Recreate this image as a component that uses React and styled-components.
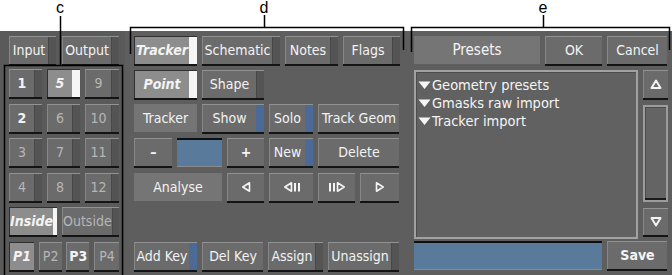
import React from 'react';
import styled, { createGlobalStyle } from 'styled-components';

const GlobalStyle = createGlobalStyle`
  html, body {
    margin: 0;
    padding: 0;
    background: #ffffff;
  }
  body {
    font-family: "DejaVu Sans Condensed", "DejaVu Sans", sans-serif;
    font-stretch: condensed;
  }
`;

const Page = styled.div`
  position: relative;
  width: 672px;
  height: 275px;
  overflow: hidden;
  background: #ffffff;
`;

const Header = styled.div`
  height: 31px;
`;

const Panel = styled.div`
  display: grid;
  grid-template-columns: 125px 280px 267px;
  height: 244px;
  background: #5e5e5e;
`;

const Column = styled.div`
  display: flex;
  flex-direction: column;
  box-sizing: border-box;
  padding: 5px 0 5px ${(p) => p.$pad}px;
  background: ${(p) => p.$bg || 'transparent'};
`;

const Row = styled.div`
  display: flex;
  gap: ${(p) => (p.$gap === undefined ? 5 : p.$gap)}px;
  & + & {
    margin-top: 6px;
  }
`;

const BottomRow = styled(Row)`
  && {
    margin-top: auto;
  }
`;

const NumberArea = styled.div`
  flex: 1;
  margin-top: 5px;
  width: 110px;
  display: flex;
  flex-direction: column;
  justify-content: space-between;
`;

const NumberRow = styled.div`
  display: flex;
  justify-content: ${(p) => (p.$spread ? 'space-between' : 'flex-start')};
  gap: ${(p) => (p.$spread ? 0 : 5)}px;
`;

const Btn = styled.div`
  box-sizing: border-box;
  flex: none;
  width: ${(p) => p.$w}px;
  height: 28px;
  display: flex;
  background: ${(p) => (p.$on ? '#8d8d8d' : '#6b6b6b')};
  border-top: 1px solid ${(p) => (p.$on ? '#303030' : '#929292')};
  border-left: 1px solid ${(p) => (p.$on ? '#303030' : '#878787')};
  box-shadow: 0 2px 0 #141414;
  color: ${(p) => (p.$dim ? '#b6b6b6' : '#f3f3f3')};
  font-size: 14px;
  font-weight: ${(p) => (p.$bold || p.$on ? 700 : 400)};
  font-style: ${(p) => (p.$on ? 'italic' : 'normal')};
  overflow: hidden;
`;

const Face = styled.span`
  flex: 1;
  display: flex;
  align-items: center;
  justify-content: center;
  white-space: nowrap;
  padding-bottom: 1px;
`;

const stripTones = {
  dark: '#545454',
  white: '#f5f5f5',
  blue: '#4b6b96',
};

const Strip = styled.span`
  flex: none;
  width: 7px;
  background: ${(p) => stripTones[p.$tone]};
  border-left: 1px solid ${(p) => (p.$tone === 'dark' ? '#484848' : 'transparent')};
  border-top: 1px solid ${(p) => (p.$tone === 'dark' ? '#7a7a7a' : 'transparent')};
  margin-top: -1px;
`;

const Tag = styled.div`
  box-sizing: border-box;
  flex: none;
  width: ${(p) => p.$w}px;
  height: 28px;
  display: flex;
  align-items: center;
  justify-content: center;
  background: #757575;
  color: #f3f3f3;
  font-size: ${(p) => p.$size || 14}px;
  white-space: nowrap;
`;

const Field = styled.div`
  box-sizing: border-box;
  flex: none;
  width: ${(p) => p.$w}px;
  height: ${(p) => p.$h || 29}px;
  background: #5a7a9b;
  border-top: 2px solid #101010;
  border-bottom: 1px solid #8c8c8c;
`;

const Browser = styled.div`
  display: flex;
  gap: 5px;
  margin-top: 6px;
`;

const ListBox = styled.div`
  box-sizing: border-box;
  width: 224px;
  height: 169px;
  border: 2px solid #a2a2a2;
  box-shadow: inset 1px 1px 0 #4c4c4c;
  background: #616161;
  padding: 4px 0 0 2px;
`;

const ListItem = styled.div`
  display: flex;
  align-items: center;
  gap: 1px;
  height: 18px;
  color: #f5f5f5;
  font-size: 14.5px;
  white-space: nowrap;
`;

const ScrollCol = styled.div`
  display: flex;
  flex-direction: column;
  width: 25px;
`;

const ScrollBtn = styled(Btn)`
  width: 25px;
  height: ${(p) => p.$h}px;
`;

const Track = styled.div`
  box-sizing: border-box;
  height: 97px;
  margin: 7px 0 6px;
  border: 2px solid #9c9c9c;
  box-shadow: inset 0 -2px 0 #1a1a1a, inset 1px 1px 0 #4c4c4c;
  background: #646464;
`;

const Overlay = styled.svg`
  position: absolute;
  left: 0;
  top: 0;
  pointer-events: none;
`;

const Mark = styled.span`
  position: absolute;
  top: 0;
  left: ${(p) => p.$x}px;
  transform: translateX(-50%);
  font-family: "Liberation Sans", Arial, sans-serif;
  font-size: 16px;
  line-height: 16px;
  color: #000;
`;

const Button = ({ w, strip, on, dim, bold, children }) => (
  <Btn $w={w} $on={on} $dim={dim} $bold={bold}>
    <Face>{children}</Face>
    {strip && <Strip $tone={strip} />}
  </Btn>
);

const icon = { fill: 'none', stroke: '#f3f3f3', strokeWidth: 1.6, strokeLinejoin: 'round' };

const BackIcon = () => (
  <svg width="10" height="12" viewBox="0 0 10 12">
    <path d="M8.5 1.8 L1.8 6 L8.5 10.2 Z" {...icon} />
  </svg>
);

const StepBackIcon = () => (
  <svg width="18" height="12" viewBox="0 0 18 12">
    <path d="M8.5 1.8 L1.8 6 L8.5 10.2 Z" {...icon} />
    <rect x="11" y="2" width="2" height="8.5" fill="#f3f3f3" />
    <rect x="15" y="2" width="2" height="8.5" fill="#f3f3f3" />
  </svg>
);

const StepFwdIcon = () => (
  <svg width="18" height="12" viewBox="0 0 18 12">
    <rect x="1" y="2" width="2" height="8.5" fill="#f3f3f3" />
    <rect x="5" y="2" width="2" height="8.5" fill="#f3f3f3" />
    <path d="M9.5 1.8 L16.2 6 L9.5 10.2 Z" {...icon} />
  </svg>
);

const FwdIcon = () => (
  <svg width="10" height="12" viewBox="0 0 10 12">
    <path d="M1.5 1.8 L8.2 6 L1.5 10.2 Z" {...icon} />
  </svg>
);

const UpIcon = () => (
  <svg width="14" height="12" viewBox="0 0 14 12">
    <path d="M7 2.5 L11.5 10 L2.5 10 Z" {...icon} strokeWidth="2" />
  </svg>
);

const DownIcon = () => (
  <svg width="14" height="12" viewBox="0 0 14 12">
    <path d="M2.5 2 L11.5 2 L7 9.5 Z" {...icon} strokeWidth="2" />
  </svg>
);

const Caret = () => (
  <svg width="13" height="10" viewBox="0 0 13 10">
    <path d="M0.5 1.5 L12.5 1.5 L6.5 9 Z" fill="#f5f5f5" />
  </svg>
);

const presets = ['Geometry presets', 'Gmasks raw import', 'Tracker import'];

const App = () => {
  return (
    <Page>
      <GlobalStyle />
      <Header />
      <Panel>
        <Column $pad={9} $bg="#5a5a5a">
          <Row $gap={6}>
            <Button w={47} strip="dark">Input</Button>
            <Button w={57} strip="dark">Output</Button>
          </Row>
          <NumberArea>
            <NumberRow>
              <Button w={33} strip="dark" bold>1</Button>
              <Button w={33} strip="white" on>5</Button>
              <Button w={34} strip="dark" dim>9</Button>
            </NumberRow>
            <NumberRow>
              <Button w={33} strip="dark" bold>2</Button>
              <Button w={33} strip="dark" dim>6</Button>
              <Button w={34} strip="dark" dim>10</Button>
            </NumberRow>
            <NumberRow>
              <Button w={33} strip="dark" dim>3</Button>
              <Button w={33} strip="dark" dim>7</Button>
              <Button w={34} strip="dark" dim>11</Button>
            </NumberRow>
            <NumberRow>
              <Button w={33} strip="dark" dim>4</Button>
              <Button w={33} strip="dark" dim>8</Button>
              <Button w={34} strip="dark" dim>12</Button>
            </NumberRow>
            <NumberRow $spread>
              <Button w={48} strip="white" on>Inside</Button>
              <Button w={57} strip="dark" dim>Outside</Button>
            </NumberRow>
            <NumberRow $spread>
              <Button w={25} on>P1</Button>
              <Button w={23} dim>P2</Button>
              <Button w={23} bold>P3</Button>
              <Button w={25} dim>P4</Button>
            </NumberRow>
          </NumberArea>
        </Column>

        <Column $pad={9}>
          <Row>
            <Button w={63} strip="white" on>Tracker</Button>
            <Button w={78} strip="dark">Schematic</Button>
            <Button w={53} strip="dark">Notes</Button>
            <Button w={57} strip="dark">Flags</Button>
          </Row>
          <Row>
            <Button w={63} strip="white" on>Point</Button>
            <Button w={62} strip="dark">Shape</Button>
          </Row>
          <Row>
            <Tag $w={63}>Tracker</Tag>
            <Button w={62} strip="blue">Show</Button>
            <Button w={44} strip="blue">Solo</Button>
            <Button w={81}>Track Geom</Button>
          </Row>
          <Row>
            <Button w={38} bold>–</Button>
            <Field $w={45} />
            <Button w={37} bold>+</Button>
            <Button w={44} strip="blue">New</Button>
            <Button w={81}>Delete</Button>
          </Row>
          <Row>
            <Tag $w={88}>Analyse</Tag>
            <Button w={37}><BackIcon /></Button>
            <Button w={44}><StepBackIcon /></Button>
            <Button w={37}><StepFwdIcon /></Button>
            <Button w={39}><FwdIcon /></Button>
          </Row>
          <BottomRow>
            <Button w={63} strip="blue">Add Key</Button>
            <Button w={61}>Del Key</Button>
            <Button w={55} strip="dark">Assign</Button>
            <Button w={71} strip="dark">Unassign</Button>
          </BottomRow>
        </Column>

        <Column $pad={9}>
          <Row>
            <Tag $w={126} $size={15}>Presets</Tag>
            <Button w={57}>OK</Button>
            <Button w={60}>Cancel</Button>
          </Row>
          <Browser>
            <ListBox>
              {presets.map((name) => (
                <ListItem key={name}>
                  <Caret />
                  {name}
                </ListItem>
              ))}
            </ListBox>
            <ScrollCol>
              <ScrollBtn $h={28}>
                <Face><UpIcon /></Face>
              </ScrollBtn>
              <Track />
              <ScrollBtn $h={27}>
                <Face><DownIcon /></Face>
              </ScrollBtn>
            </ScrollCol>
          </Browser>
          <BottomRow>
            <Field $w={188} />
            <Button w={60} bold>Save</Button>
          </BottomRow>
        </Column>
      </Panel>

      <Mark $x={60}>c</Mark>
      <Mark $x={264}>d</Mark>
      <Mark $x={543}>e</Mark>
      <Overlay width="672" height="275" viewBox="0 0 672 275">
        <g fill="none" stroke="#000" strokeWidth="1.5">
          <path d="M60.5 16 V65.5" />
          <path d="M4.5 276 V65.5 H122.5 V276" />
          <path d="M264.5 15 V27.5" />
          <path d="M130.5 54 V27.5 H403.5 V50" />
          <path d="M543.5 15 V27.5" />
          <path d="M411.5 52 V27.5 H669.5 V50" />
        </g>
      </Overlay>
    </Page>
  );
};

export default App;
